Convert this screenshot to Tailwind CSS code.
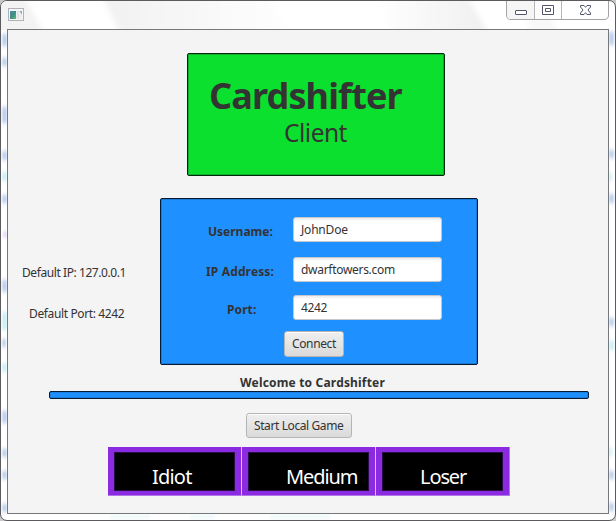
<!DOCTYPE html>
<html lang="en">
<head>
<meta charset="utf-8">
<title>Cardshifter Client</title>
<script src="https://cdn.jsdelivr.net/npm/@tailwindcss/browser@4"></script>
</head>
<body class="w-[616px] h-[521px] overflow-hidden bg-[#c8c8c8] font-['Noto_Sans','Open_Sans',sans-serif] text-[12px] text-[#333333] whitespace-nowrap">
<div class="relative w-[616px] h-[521px] flex flex-col rounded-[7px] border border-[#5c5a5c] bg-white overflow-hidden">
  <!-- glass frame tints -->
  <svg class="absolute left-0 top-0" width="614" height="519" viewBox="1 1 614 519">
    <defs>
      <filter id="soft" x="-50%" y="-50%" width="200%" height="200%"><feGaussianBlur stdDeviation="1 2"/></filter>
      <filter id="streak" x="-20%" y="-50%" width="140%" height="200%"><feGaussianBlur stdDeviation="3 0"/></filter>
      <linearGradient id="fadeout" x1="0" y1="0" x2="1" y2="0"><stop offset="0" stop-color="#f1f1f1"/><stop offset=".6" stop-color="#f9f9f9"/><stop offset="1" stop-color="#fefefe"/></linearGradient>
      <linearGradient id="fadein" x1="0" y1="0" x2="1" y2="0"><stop offset="0" stop-color="#fefefe"/><stop offset="1" stop-color="#f0f0f0"/></linearGradient>
    </defs>
    <g filter="url(#streak)">
      <path d="M-10 0H26L42 30H-10Z" fill="#f3f3f3"/>
      <path d="M104 0H270L290 30H119Z" fill="url(#fadeout)"/>
      <path d="M380 0H470L486 30H390Z" fill="url(#fadein)"/>
      <path d="M525 0H545L556 30H530Z" fill="#f8f8f8"/>
    </g>
    <g filter="url(#soft)">
      <g fill="#bdd0ef">
        <rect x="2" y="34" width="5" height="12"/><rect x="2" y="58" width="5" height="8"/><rect x="2" y="107" width="5" height="16"/><rect x="2" y="151" width="5" height="9"/><rect x="2" y="195" width="5" height="8"/><rect x="2" y="280" width="5" height="12"/><rect x="2" y="339" width="4" height="8"/><rect x="2" y="411" width="5" height="12"/><rect x="2" y="449" width="5" height="8"/><rect x="2" y="471" width="5" height="8"/><rect x="2" y="504" width="5" height="8"/>
        <rect x="609" y="32" width="5" height="13"/><rect x="609" y="150" width="5" height="8"/><rect x="609" y="194" width="5" height="9"/><rect x="609" y="318" width="5" height="8"/><rect x="609" y="471" width="5" height="8"/><rect x="609" y="503" width="5" height="8"/>
      </g>
      <g fill="#cdf0f6"><rect x="2" y="172" width="5" height="9"/><rect x="2" y="312" width="5" height="18"/><rect x="2" y="363" width="5" height="9"/><rect x="609" y="173" width="3" height="8"/><rect x="609" y="341" width="5" height="9"/><rect x="609" y="448" width="3" height="8"/></g>
      <rect x="3" y="232" width="4" height="5" fill="#e3ccf5"/>
      <g fill="#e4f5f6"><rect x="110" y="515" width="40" height="3"/><rect x="190" y="515" width="25" height="3"/><rect x="270" y="515" width="60" height="3"/></g>
    </g>
  </svg>

  <header class="relative h-[28px] shrink-0 flex items-start justify-between pl-[7px] pr-[6px]">
    <svg class="mt-[7px]" width="16" height="13" viewBox="0 0 16 13">
      <defs><linearGradient id="app" x1="0" y1="0" x2="1" y2="1"><stop offset="0" stop-color="#4f8aa8"/><stop offset=".5" stop-color="#3c8f87"/><stop offset="1" stop-color="#65b56f"/></linearGradient></defs>
      <rect x=".5" y=".5" width="15" height="12" fill="#f6f6f6" stroke="#aeb3ba"/>
      <rect x="2" y="3" width="6" height="8" fill="url(#app)"/>
      <rect x="8.5" y="3" width="3" height="8" fill="#e2e2e2"/>
      <path d="M11.500 3H14V7Z" fill="#77b3c5"/><rect x="12" y="7" width="2" height="4" fill="#e9efe9"/>
    </svg>
    <svg class="-mt-px" width="103" height="20" viewBox="506 0 103 20" fill="none">
      <path d="M506.500 0V15Q506.500 19.500 511 19.500H604Q608.500 19.500 608.500 15V0" fill="#fff" fill-opacity=".5" stroke="#a3a3a6"/>
      <path d="M507 1H534V19H511Q507 19 507 15Z" fill="#f5f5f5"/>
      <path d="M534.500 1V19M561.500 1V19" stroke="#b5b5b8"/>
      <path d="M506 .5H609" stroke="#5c5a5c"/>
      <rect x="515.500" y="10.500" width="11" height="4" rx=".5" fill="#fff" stroke="#53566b"/>
      <path fill-rule="evenodd" d="M542.500 5.500h11v9h-11zM545.500 8.500h5v3h-5z" fill="#fff" stroke="#53566b"/>
      <path d="M580.500 5.500H584L585.500 7.300L587 5.500H590.500V7L588 10L590.500 13V14.500H587L585.500 12.700L584 14.500H580.500V13L583 10L580.500 7Z" fill="#fff" stroke="#53566b"/>
    </svg>
  </header>

  <main class="relative ml-[6px] w-[602px] h-[485px] shrink-0 border border-[#777879] bg-[#f4f4f4] flex flex-col items-start">
    <section class="mt-[23px] ml-[179px] w-[258px] h-[123px] shrink-0 rounded-[2px] border border-[#04280a] bg-[#0be02f] shadow-[inset_0_0_0_1px_#0cae2a] flex flex-col">
      <h1 class="mt-[22px] ml-[21px] h-[40px] leading-[40px] text-[36px] font-bold tracking-[-0.85px]"><span>Cardshifter</span></h1>
      <p class="mt-[3px] ml-[96px] h-[28px] leading-[28px] text-[24.500px] tracking-[-0.5px]"><span>Client</span></p>
    </section>

    <div class="mt-[22px] flex shrink-0 h-[167px]">
      <aside class="w-[152px] flex flex-col">
        <span class="mt-[67px] ml-[14px] leading-[16px] tracking-[-0.42px]">Default IP: 127.0.0.1</span>
        <span class="mt-[25px] ml-[21px] leading-[16px] tracking-[-0.37px]">Default Port: 4242</span>
      </aside>
      <section class="w-[318px] h-[167px] rounded-[2px] border border-[#061a33] bg-[#1e90ff] shadow-[inset_0_0_0_1px_#1a78d6]">
        <div class="mt-[18px] flex h-[25px]">
          <label class="w-[132px] pl-[47px] pt-[7px] leading-[16px] font-bold"><span>Username:</span></label>
          <div class="w-[149px] h-[25px] rounded-[3px] border border-[#c4c8cc] bg-white shadow-[inset_0_2px_2px_#eeeeee] pl-[7px] pt-[4px] leading-[16px] tracking-[-0.2px]"><span>JohnDoe</span></div>
        </div>
        <div class="mt-[15px] flex h-[25px]">
          <label class="w-[132px] pl-[45px] pt-[7px] leading-[16px] font-bold tracking-[0.15px]"><span>IP Address:</span></label>
          <div class="w-[149px] h-[25px] rounded-[3px] border border-[#c4c8cc] bg-white shadow-[inset_0_2px_2px_#eeeeee] pl-[7px] pt-[4px] leading-[16px] tracking-[-0.3px]"><span>dwarftowers.com</span></div>
        </div>
        <div class="mt-[13px] flex h-[25px]">
          <label class="w-[132px] pl-[66px] pt-[7px] leading-[16px] font-bold tracking-[0.1px]"><span>Port:</span></label>
          <div class="w-[149px] h-[25px] rounded-[3px] border border-[#c4c8cc] bg-white shadow-[inset_0_2px_2px_#eeeeee] pl-[7px] pt-[4px] leading-[16px] tracking-[-0.4px]"><span>4242</span></div>
        </div>
        <button class="block mt-[11px] ml-[123px] w-[60px] h-[26px] rounded-[3px] border border-[#b5b5b5] bg-linear-to-b from-[#efefef] to-[#dadada] shadow-[inset_0_1px_0_#fcfcfc] pl-[7px] leading-[16px] text-left tracking-[-0.37px]"><span>Connect</span></button>
      </section>
    </div>

    <p class="mt-[10px] ml-[232px] h-[16px] shrink-0 leading-[16px] font-bold tracking-[0.18px]"><span>Welcome to Cardshifter</span></p>
    <div class="ml-[41px] w-[540px] h-[8px] shrink-0 rounded-[2px] border border-[#061a33] bg-[#1e90ff] shadow-[inset_0_0_0_1px_#1b80e4]"></div>
    <button class="mt-[14px] ml-[238px] w-[106px] h-[25px] shrink-0 rounded-[3px] border border-[#b5b5b5] bg-linear-to-b from-[#efefef] to-[#dadada] shadow-[inset_0_1px_0_#fcfcfc] pl-[7px] leading-[16px] text-left tracking-[-0.4px]"><span>Start Local Game</span></button>

    <div class="mt-[9px] ml-[100px] h-[49px] shrink-0 flex text-[20px] text-white">
      <div class="w-[134px] border-r border-b border-r-[#d9baf4] border-b-[#b275e8] bg-[#8a2be2] pl-[6px] pt-[5px]"><div class="w-[121px] h-[39px] bg-black shadow-[inset_0_0_0_1px_#2b0d47] pl-[38px] pt-[11px] leading-[28px] tracking-[-0.8px]"><span>Idiot</span></div></div>
      <div class="w-[134px] border-r border-b border-r-[#d9baf4] border-b-[#b275e8] bg-[#8a2be2] pl-[6px] pt-[5px]"><div class="w-[121px] h-[39px] bg-black shadow-[inset_0_0_0_1px_#2b0d47] pl-[38px] pt-[11px] leading-[28px] tracking-[-1.1px]"><span>Medium</span></div></div>
      <div class="w-[134px] border-r border-b border-r-[#b275e8] border-b-[#b275e8] bg-[#8a2be2] pl-[6px] pt-[5px]"><div class="w-[121px] h-[39px] bg-black shadow-[inset_0_0_0_1px_#2b0d47] pl-[38px] pt-[11px] leading-[28px] tracking-[-1.1px]"><span>Loser</span></div></div>
    </div>
  </main>
</div>
</body>
</html>
